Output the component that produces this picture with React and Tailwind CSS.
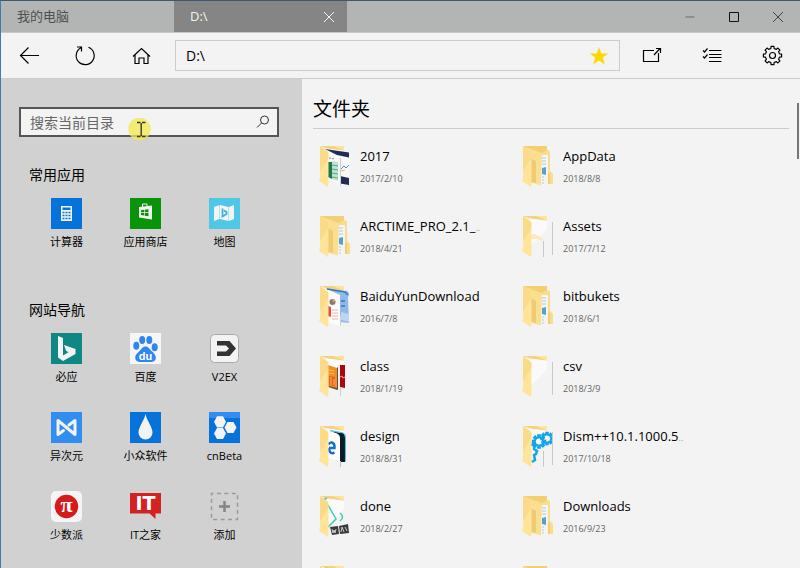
const apps = [
  { name: "计算器", icon: CalculatorIcon },
  { name: "应用商店", icon: StoreIcon },
  { name: "地图", icon: MapIcon },
];

const sites = [
  { name: "必应", icon: BingIcon },
  { name: "百度", icon: BaiduIcon },
  { name: "V2EX", icon: V2exIcon },
  { name: "异次元", icon: IplaysoftIcon },
  { name: "小众软件", icon: AppinnIcon },
  { name: "cnBeta", icon: CnbetaIcon },
  { name: "少数派", icon: SspaiIcon },
  { name: "IT之家", icon: IthomeIcon },
  { name: "添加", icon: AddIcon },
];

const folders = [
  { name: "2017", date: "2017/2/10", content: "sheet" },
  { name: "AppData", date: "2018/8/8", content: "full" },
  { name: "ARCTIME_PRO_2.1_", cut: true, date: "2018/4/21", content: "full" },
  { name: "Assets", date: "2017/7/12", content: "assets" },
  { name: "BaiduYunDownload", date: "2016/7/8", content: "download" },
  { name: "bitbukets", date: "2018/6/1", content: "full" },
  { name: "class", date: "2018/1/19", content: "books" },
  { name: "csv", date: "2018/3/9", content: "empty" },
  { name: "design", date: "2018/8/31", content: "edge" },
  { name: "Dism++10.1.1000.5", cut: true, date: "2017/10/18", content: "gears" },
  { name: "done", date: "2018/2/27", content: "video" },
  { name: "Downloads", date: "2016/9/23", content: "full" },
  { content: "video" },
  { content: "full" },
];

// outline of a toothed wheel around (cx, cy)
function gearPath(cx, cy, outer, inner, teeth = 8) {
  const step = (Math.PI * 2) / teeth;
  const points = [];
  for (let i = 0; i < teeth; i++) {
    const a = i * step - Math.PI / 2;
    [
      [inner, -0.29],
      [outer, -0.2],
      [outer, 0.2],
      [inner, 0.29],
    ].forEach(([r, t]) => {
      const x = cx + r * Math.cos(a + t * step);
      const y = cy + r * Math.sin(a + t * step);
      points.push(`${x.toFixed(2)} ${y.toFixed(2)}`);
    });
  }
  return `M${points.join("L")}Z`;
}

function LineIcon({ children }) {
  return (
    <svg
      className="h-6 w-6"
      viewBox="0 0 24 24"
      fill="none"
      stroke="currentColor"
      strokeWidth="1.2"
      aria-hidden="true"
    >
      {children}
    </svg>
  );
}

function Tile({ children }) {
  return (
    <svg className="h-[31px] w-[31px]" viewBox="0 0 31 31" aria-hidden="true">
      {children}
    </svg>
  );
}

function CalculatorIcon() {
  return (
    <Tile>
      <rect width="31" height="31" fill="#0573d9" />
      <rect x="10" y="8" width="11" height="15" fill="#f3f3f3" />
      <rect x="11.5" y="9.5" width="8" height="2.5" fill="#0573d9" />
      <path
        d="M11.5 14.5h8M11.5 17.5h8M11.5 20.5h8"
        stroke="#0573d9"
        strokeWidth="1.5"
        strokeDasharray="2 1"
      />
    </Tile>
  );
}

function StoreIcon() {
  return (
    <Tile>
      <rect width="31" height="31" fill="#089408" />
      <path d="M12.5 9V6h4.5v2" fill="none" stroke="#f3f3f3" />
      <path d="M9 9l13-1.5v14L9 19.5z" fill="#f3f3f3" />
      <path
        d="M11 12.2l3-.4v2.4h-3zM14.7 11.7l3.8-.5v3h-3.8zM11 15h3v2.6l-3-.5zM14.7 15h3.8v3.2l-3.8-.5z"
        fill="#089408"
      />
    </Tile>
  );
}

function MapIcon() {
  return (
    <Tile>
      <rect width="31" height="31" fill="#4fc8e8" />
      <path d="M5 9l5.500-2v14L5 23zM10.900 7l8.700 2v14l-8.700-2zM20 9l5-2v14l-5 2z" fill="#f3f3f3" />
      <path d="M13.5 10.500v8l4-2.500v-2l-2.500-1.500" fill="none" stroke="#36b4dc" strokeWidth="1.8" />
    </Tile>
  );
}

function BingIcon() {
  return (
    <Tile>
      <rect width="31" height="31" fill="#0f8784" />
      <path
        d="M7 3l5 2v17.5l5.5-3.3-2.5-1.5-2-5.700 11.5 4v5L12 28l-5-3.5z"
        fill="#f3f3f3"
      />
    </Tile>
  );
}

function BaiduIcon() {
  return (
    <Tile>
      <rect width="31" height="31" fill="#f5f6f8" />
      <g fill="#2f86ee">
        <ellipse cx="6.3" cy="12.7" rx="3" ry="4" />
        <ellipse cx="12.2" cy="7" rx="3" ry="4" />
        <ellipse cx="19.3" cy="7" rx="3" ry="4" />
        <ellipse cx="24.7" cy="14.2" rx="3" ry="4" />
        <path d="M15.5 13.5c3 0 4 2.5 6 4.5 2.5 2 4.5 4 4.3 7-.2 3-2.8 4-5.3 4-3 0-7 0-10 0-3 0-5.3-1.5-5.3-4.5 0-3 2.5-4.5 4.3-6.5 2-2 3-4.5 6-4.5z" />
      </g>
      <text
        x="15.5"
        y="26.5"
        textAnchor="middle"
        className="fill-white font-['Liberation_Sans',sans-serif] text-[11px] font-bold"
      >
        du
      </text>
    </Tile>
  );
}

function V2exIcon() {
  return (
    <Tile>
      <rect x="1.5" y="1.5" width="28" height="28" rx="4" fill="#f3f3f3" stroke="#aaaaaa" />
      <path d="M8 8h12.5l6.5 7.5-6.5 7.5H8v-4.5h9l3-3-3-3H8z" fill="#333333" />
    </Tile>
  );
}

function IplaysoftIcon() {
  return (
    <Tile>
      <rect width="31" height="31" fill="#318df0" />
      <path
        d="M12.5 18.5l-5.5 4v-14l17 14v-14l-6 4.5"
        fill="none"
        stroke="#f3f3f3"
        strokeWidth="3"
        strokeLinejoin="round"
        strokeLinecap="round"
      />
    </Tile>
  );
}

function AppinnIcon() {
  return (
    <Tile>
      <rect width="31" height="31" fill="#0573d9" />
      <path d="M15.5 2c1 6 7 13 7 18.5a7 7 0 0 1-14 0C8.5 15 14.5 8 15.5 2z" fill="#f3f3f3" />
    </Tile>
  );
}

function CnbetaIcon() {
  return (
    <Tile>
      <rect width="31" height="31" fill="#0573d9" />
      <rect width="31" height="6" fill="#318df0" />
      <g fill="#f3f3f3">
        <path d="M5 10l3-5.700h6l3 5.700-3 5.5H8z" />
        <path d="M15.500 15.500l3-5.500h6l3 5.500-3 5.500h-6z" />
        <path d="M5 21.500L8 16h6l3 5.500-3 5.500H8z" />
      </g>
    </Tile>
  );
}

function SspaiIcon() {
  return (
    <Tile>
      <rect width="31" height="31" rx="5" fill="#f5f5f5" />
      <circle cx="15.5" cy="15.5" r="11.7" fill="#d71a1b" />
      <text
        x="15.5"
        y="21"
        textAnchor="middle"
        className="fill-white font-['Liberation_Serif',serif] text-[22px] font-bold"
      >
        π
      </text>
    </Tile>
  );
}

function IthomeIcon() {
  return (
    <Tile>
      <path d="M0 2h31v20.5h-5.5V28l-6-5.5H0z" fill="#d22222" />
      <text
        x="15.5"
        y="19"
        textAnchor="middle"
        className="fill-white font-['DejaVu_Sans',sans-serif] text-[19px] font-bold"
      >
        IT
      </text>
    </Tile>
  );
}

function AddIcon() {
  return (
    <Tile>
      <rect
        x="2.5"
        y="2.5"
        width="26"
        height="26"
        fill="none"
        stroke="#9a9a9a"
        strokeWidth="1.5"
        strokeDasharray="4 3.43"
        strokeDashoffset="2"
      />
      <path d="M15.5 10v11M10 15.5h11" stroke="#858585" strokeWidth="2.5" />
    </Tile>
  );
}

function FolderContent({ kind }) {
  switch (kind) {
    case "sheet":
      return (
        <>
          <path d="M6 3l24 3v33l-9 1-12-8V9z" fill="#f8f8f8" />
          <path d="M6 3l24 3.5v5L18 9zM21 30l9 2v7l-9-1.5z" fill="#1f2d55" />
          <path d="M9 16h4v17l-4-2z" fill="#1f7a4d" />
          <path d="M13 15l6 1v19l-6-2z" fill="#bfe3d0" />
          <path d="M13 19l6 1M13 23l6 1M13 27l6 1M13 31l6 1" stroke="#4fae85" />
          <path d="M10 12l6 1" stroke="#888888" strokeDasharray="2 1" />
          <path d="M22 23l3-3 2 2 3-3" fill="none" stroke="#4a8fd0" />
          <path d="M22 25l4-1" stroke="#f0b63c" />
          <path d="M21.5 12v28" stroke="#cfcfcf" />
        </>
      );
    case "download":
      return (
        <>
          <path d="M6 2l20 3c3-1 4 2 4 4l-1 2 1 26-9-1V9z" fill="#8fb9e8" />
          <path d="M8 4l13 5v31l-12-4z" fill="#fbfbfb" />
          <path d="M8 3l18 3 3 3M22 15h4M22 20h4" fill="none" stroke="#3c74b8" strokeWidth="1.5" />
          <path d="M22 26l8 2v8l-8-2z" fill="#bcd6f2" />
          <circle cx="13.5" cy="16" r="3" fill="#8b7772" />
          <path d="M13.5 13v3.5l3-2z" fill="#e0a080" />
          <path d="M9 20l3 1v10l-3-1z" fill="#e0513f" />
          <path d="M13 24h6M13 27h6M13 30h6M13 33h6" stroke="#f0b7a4" />
          <path d="M21.500 30v10" stroke="#cfcfcf" />
        </>
      );
    case "books":
      return (
        <>
          <path d="M9 9l9 3v22l-9-3z" fill="#f1901e" />
          <path d="M18 11l1 1v22l-9-3v-1l8 2z" fill="#5c5040" />
          <path d="M10 20l6 1v9l-6-1z" fill="#ea5a25" />
          <path d="M10 14l5 1M10 17l5 1M12 21v8M15 23v6" stroke="#f9c060" />
          <path d="M21 9h5v23l-5-1z" fill="#b00510" />
          <path d="M21 21l2-1 1 2 2-1" fill="none" stroke="#e8a0a0" />
          <path d="M21.5 32v8" stroke="#cfcfcf" />
        </>
      );
    case "edge":
      return (
        <>
          <path d="M6 3l16 4v28l-13-3z" fill="#fcfcfc" />
          <path
            d="M10 22h5.500c.5-6-4-7-6-3.500M10 22c0 5 3 6 5.500 4.500"
            fill="none"
            stroke="#0b70d0"
            strokeWidth="2.4"
          />
          <path d="M11 5l11 2c3 0 4 2 4 5v24h-5V12c0-3-2-4-4-5z" fill="#0b1c24" />
          <path d="M11 4.500l11 2c3 0 4.500 2 4.500 5v24" fill="none" stroke="#35c5e5" />
          <path d="M21.5 35v6" stroke="#bdbdbd" />
        </>
      );
    case "gears":
      return (
        <>
          <g fill="none" stroke="#12a5e8" strokeWidth="1.8">
            <path d={gearPath(17, 15.5, 6.4, 4)} />
            <path d={gearPath(25, 12.5, 6, 4)} />
            <path d="M9 19l3-1v5l3 2-1 3-2 1 1 5-3 2" strokeWidth="2.5" />
          </g>
          <path d="M21.5 25v16M30.5 6v33" stroke="#c8c8c8" />
        </>
      );
    case "video":
      return (
        <>
          <path
            d="M9 9l8 14-8 8M4 4l4-2M21 17q5 4 0 8"
            fill="none"
            stroke="#3fcdb5"
            strokeWidth="1.5"
          />
          <path d="M11 31l8-1 1 8-7 1zM20 30l9-2 1 9-9 1z" fill="#3a3a3a" />
          <path d="M13 33l1 4 1-3 1 3 1-4M22 36l1-5 2 5M26 31l2 4" fill="none" stroke="#cccccc" />
        </>
      );
    case "assets":
      return (
        <>
          <path d="M9 19l4-1 7 4v3l-4-2H9z" fill="#fbe9bd" />
          <path d="M21.5 25v16M30.5 6v33" stroke="#c8c8c8" />
        </>
      );
    case "empty":
      return <path d="M30.5 6v33" stroke="#c8c8c8" />;
    default:
      return null;
  }
}

function FolderIcon({ content }) {
  return (
    <svg className="h-[41px] w-[31px] shrink-0" viewBox="0 0 31 41" aria-hidden="true">
      {content === "full" ? (
        <>
          <path d="M1 0h24v4l3 1v20l3 3v10h-5V9H9z" fill="#f9dd8c" />
          <path d="M1 0h24v4l-5 3z" fill="#f3cf73" />
          <path d="M26 27h2v11h-2z" fill="#f3cf73" />
          <path d="M19 9h6v19l-3 1v9l-3 1z" fill="#f4f7fa" />
          <path d="M20 12h4M20 15h4M20 18h4M20 31h2M20 34h2M20 37h2" stroke="#b9c4ce" />
          <path d="M20 22l4-1v8l-4-1z" fill="#5a9fd0" />
          <path d="M4 2l16 6-1 31.5-10-3z" fill="#fbdf91" />
          <path d="M9 12l5 3v22l-5-1z" fill="#efcc74" />
        </>
      ) : (
        <>
          <path d="M1 0h24v4.5L8 2.5z" fill="#f5d37b" />
          <path d="M14 0h11v4.5z" fill="#ffe49a" />
          <path d="M7 2.5l18 2.5v8L9 30z" fill="#fafafa" />
          <FolderContent kind={content} />
        </>
      )}
      <path d="M1 0l8 6c1 1 .5 2 .5 4v22c0 4 0 8-.7 9L0 35l1-3z" fill="#ffe49a" />
      <path d="M1 0l8 6v7L1 25z" fill="#fbdb88" />
    </svg>
  );
}

function Launcher({ title, items }) {
  return (
    <section>
      <h2 className="pl-[10px] text-[14px] leading-6">{title}</h2>
      <ul className="mt-[11px] flex flex-wrap gap-y-[25px] pl-2">
        {items.map(({ name, icon: Icon }) => (
          <li key={name} className="w-[79px]">
            <button type="button" className="flex w-full flex-col items-center gap-[3px]">
              <Icon />
              <span className="text-[11px] leading-5">{name}</span>
            </button>
          </li>
        ))}
      </ul>
    </section>
  );
}

function TitleBar() {
  return (
    <header className="flex h-8 shrink-0 items-stretch border-b border-[#c6c8c7] bg-[#b2b5b3]">
      <button type="button" className="w-[173px] pl-4 text-left text-[13px] text-[#505050]">
        我的电脑
      </button>
      <div className="flex w-[173px] items-center bg-[#858585] text-[#f3f3f3]">
        <button type="button" className="flex-1 pl-4 text-left text-[13px]">
          D:\
        </button>
        <button type="button" aria-label="关闭标签页" className="flex w-9 justify-center">
          <svg className="h-3 w-3" viewBox="0 0 12 12" stroke="currentColor" aria-hidden="true">
            <path d="M1 1l10 10M11 1L1 11" />
          </svg>
        </button>
      </div>
      <div className="ml-auto flex text-[#444444]">
        <button type="button" aria-label="最小化" className="flex w-11 items-center justify-center">
          <svg className="h-3 w-3" viewBox="0 0 12 12" stroke="#858585" aria-hidden="true">
            <path d="M1.5 6h9" strokeWidth="1.5" />
          </svg>
        </button>
        <button type="button" aria-label="最大化" className="flex w-11 items-center justify-center">
          <svg className="h-3 w-3" viewBox="0 0 12 12" fill="none" stroke="#111111" aria-hidden="true">
            <path d="M1.5 1.5h9v9h-9z" />
          </svg>
        </button>
        <button type="button" aria-label="关闭" className="flex w-11 items-center justify-center">
          <svg className="h-3 w-3" viewBox="0 0 12 12" stroke="currentColor" aria-hidden="true">
            <path d="M1 1l10 10M11 1L1 11" />
          </svg>
        </button>
      </div>
    </header>
  );
}

function Toolbar() {
  return (
    <nav className="flex h-[46px] shrink-0 items-center border-b border-[#cccccc] bg-[#f3f3f3]">
      <button type="button" aria-label="后退" className="flex w-14 justify-center">
        <LineIcon>
          <path d="M3.5 11.500H22M11.500 3.500l-8 8 8 8" />
        </LineIcon>
      </button>
      <button type="button" aria-label="刷新" className="flex w-14 justify-center">
        <LineIcon>
          <path d="M15.5 3.3a9 9 0 1 1-7.5.4M4 3h4.500v4.500" />
        </LineIcon>
      </button>
      <button type="button" aria-label="主页" className="flex w-14 justify-center">
        <LineIcon>
          <path d="M4 12.500l8.500-8 8.500 8M6 11v8.500h4V14h5v5.500h4V11" />
        </LineIcon>
      </button>
      <div className="ml-[6px] flex h-[31px] flex-1 items-center border border-[#cccccc] pr-[10px]">
        <input
          type="text"
          aria-label="路径"
          defaultValue="D:\"
          className="min-w-0 flex-1 bg-transparent pl-[10px] text-[14px] outline-none"
        />
        <button type="button" aria-label="收藏">
          <svg className="h-5 w-5" viewBox="0 0 20 20" fill="#ffd800" aria-hidden="true">
            <path d="M10 1l2.3 6.6h6.9l-5.5 4.1 2.1 6.8-5.8-4.1-5.8 4.1 2.1-6.8L.8 7.6h6.9z" />
          </svg>
        </button>
      </div>
      <button type="button" aria-label="在新窗口中打开" className="flex w-[60px] justify-center pl-1">
        <LineIcon>
          <path d="M14 6.500H3.500v11h15V9M14 11l6-6.500M16 4.500h4.500V9" />
        </LineIcon>
      </button>
      <button type="button" aria-label="选择" className="flex w-[60px] justify-center pl-1">
        <LineIcon>
          <path d="M9 6.5h12.5M9 10.5h12.5M9 13.500h12.5M9 17.500h12.5M3 6.500L4.500 8l3-3.500M3 12.500L4.500 14l3-3.500" />
        </LineIcon>
      </button>
      <button type="button" aria-label="设置" className="flex w-[60px] justify-center pl-1">
        <LineIcon>
          <path d={gearPath(12.5, 11.5, 9.2, 7.2)} strokeLinejoin="round" />
          <circle cx="12.5" cy="11.5" r="3" />
        </LineIcon>
      </button>
    </nav>
  );
}

function Sidebar() {
  return (
    <aside className="w-[301px] shrink-0 overflow-hidden bg-[#d1d1d1] pt-7 pr-[23px] pl-[18px]">
      <form className="relative mb-[26px] flex h-[30px] items-center border-2 border-[#555555] bg-[#f3f3f3] pr-[6px]">
        <input
          type="text"
          aria-label="搜索当前目录"
          placeholder="搜索当前目录"
          className="min-w-0 flex-1 bg-transparent pl-[9px] text-[14px] outline-none placeholder:text-[#666666]"
        />
        <button type="button" aria-label="搜索">
          <svg
            className="h-4 w-4"
            viewBox="0 0 16 16"
            fill="none"
            stroke="#333333"
            aria-hidden="true"
          >
            <circle cx="9.5" cy="6" r="4" />
            <path d="M6.5 9L2 13.5" />
          </svg>
        </button>
        {/* pointer with its click highlight */}
        <svg
          className="pointer-events-none absolute top-[9px] left-[107px] h-6 w-6"
          viewBox="0 0 24 24"
          aria-hidden="true"
        >
          <circle cx="11.5" cy="11" r="11.3" fill="#f1ea4c" fillOpacity=".75" />
          <path
            d="M9 4.5h3.5M14 4.5h3.5M9 18.5h3.5M14 18.5h3.5M13.2 5v13"
            stroke="#3c3a20"
            strokeWidth="1.4"
          />
        </svg>
      </form>
      <Launcher title="常用应用" items={apps} />
      <div className="h-[46px]" />
      <Launcher title="网站导航" items={sites} />
    </aside>
  );
}

function FileArea() {
  return (
    <main className="relative min-w-0 flex-1 overflow-hidden bg-[#f3f3f3] pt-4 pr-[11px] pl-[11px]">
      <h1 className="border-b border-[#cccccc] pb-[5px] text-[19px] leading-7">文件夹</h1>
      <ul className="mt-[17px] grid grid-cols-[repeat(auto-fill,203px)] gap-y-7 pl-[6px]">
        {folders.map((folder, i) => (
          <li key={i} className="flex h-[42px] gap-[10px]">
            <FolderIcon content={folder.content} />
            {folder.name && (
              <div className="min-w-0">
                <p className="h-5 text-[13px] leading-5 whitespace-nowrap">
                  {folder.name}
                  {folder.cut && <span className="text-[9px] text-[#999999]">..</span>}
                </p>
                <p className="mt-[5px] text-[9px] leading-4 text-[#666666]">{folder.date}</p>
              </div>
            )}
          </li>
        ))}
      </ul>
      <div className="absolute top-6 right-[1px] h-14 w-[2px] bg-[#767676]" />
    </main>
  );
}

export default function App() {
  return (
    <div className="flex h-screen flex-col overflow-hidden border-t border-l border-t-[#3d5872] border-l-[#3a7db5] bg-[#f3f3f3] font-['Open_Sans','Noto_Sans_CJK_SC',sans-serif] text-black">
      <TitleBar />
      <Toolbar />
      <div className="flex min-h-0 flex-1">
        <Sidebar />
        <FileArea />
      </div>
    </div>
  );
}
